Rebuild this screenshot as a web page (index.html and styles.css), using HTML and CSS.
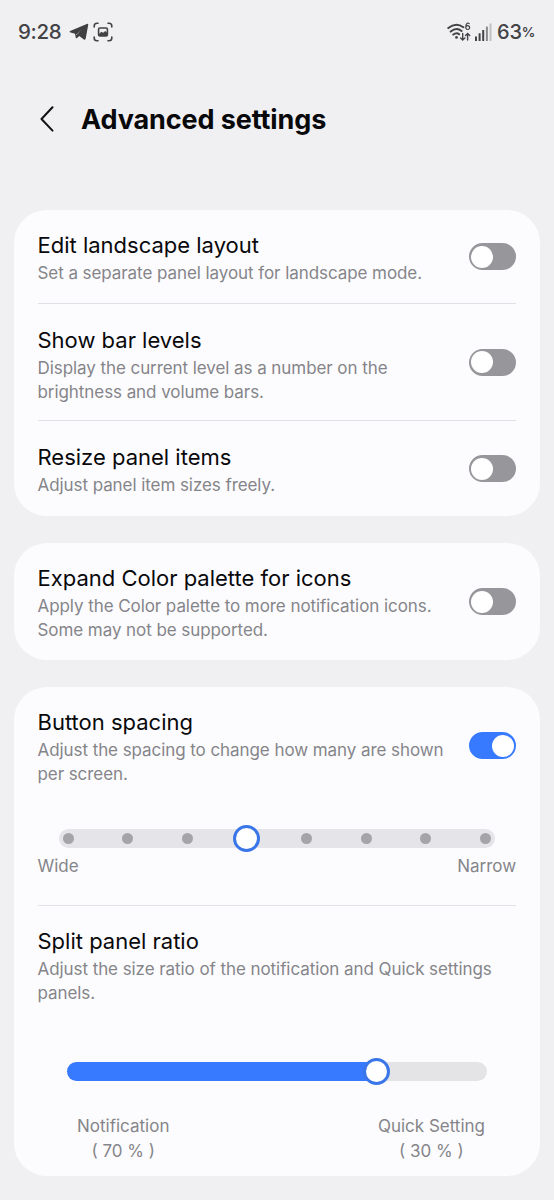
FILE: index.html
```html
<!DOCTYPE html>
<html lang="en">
<head>
<meta charset="utf-8">
<title>Advanced settings</title>
<link rel="stylesheet" href="styles.css">
</head>
<body>
<div class="status">
  <span class="clock">9:28</span>
  <svg class="telegram" width="20" height="18" viewBox="0 0 20 18"><path d="M.8 9.2Q.2 8.6 1.2 8.1L17.8.9Q19.5.3 19.2 2L16.7 15.6Q16.3 17.3 14.9 16.4L10.2 12.9 7.8 15.2Q6.9 15.7 6.7 14.6L6 10.8ZM7.4 11.4 7.6 12.6 8.2 11.3 12.8 6.6Z" fill="#3f3f42"/></svg>
  <svg class="capture" width="20" height="20" viewBox="0 0 20 20" fill="none" stroke="#434346" stroke-width="1.6" stroke-linecap="round"><path d="M1.2 5V4Q1.2 1.2 4 1.2H5M15 1.2h1Q18.8 1.2 18.8 4v1M18.8 15v1q0 2.8-2.8 2.8h-1M5 18.8H4Q1.2 18.8 1.2 16v-1"/><rect x="5.6" y="6" width="8.8" height="8" rx="1.3"/><path d="m6 12 2.4-2.2 1.8 1 2-1.8 2 1.7v3.3H6Z" fill="#434346" stroke="none"/></svg>
  <span class="space"></span>
  <svg class="wifi" width="24" height="20" viewBox="0 0 24 20" fill="none" stroke="#434346" stroke-width="2" stroke-linecap="round"><path d="M1.3 6.1Q8.8-.3 16.4 5.2M3.7 9.6Q9.4 4.9 14.6 9M6.3 12.6Q9.6 9.9 12.1 12.3"/><circle cx="9.5" cy="15.4" r="1.4" fill="#434346" stroke="none"/><path d="M15.7 11.5V18m-2.1-2 2.1 2.1 2.1-2.1M20.6 18v-6.5m-2.1 2 2.1-2.1 2.1 2.1" stroke-width="1.4"/><path d="M22.2 1.6Q21.2.7 20.2 1.2 18.8 2 18.8 5.2M20.7 3.7a1.9 1.9 0 1 1-.01 0Z" stroke-width="1.2"/></svg>
  <svg class="signal" width="17" height="18" viewBox="0 0 17 18"><path d="M0 13.5h2V18H0zM3.6 10.3h2V18h-2zM7.2 7h2v11h-2z" fill="#434346"/><path d="M10.9 3.6h2V18h-2z" fill="#8a8a8d"/><path d="M14.5.5h2V18h-2z" fill="#c0c0c3"/></svg>
  <span class="battery">63<small>%</small></span>
</div>
<header class="header">
  <svg class="back" width="14" height="26" viewBox="0 0 14 26"><path d="M12.5 1.3 1.5 13l11 11.6" fill="none" stroke="#111" stroke-width="2" stroke-linecap="round" stroke-linejoin="round"/></svg>
  <h1>Advanced settings</h1>
</header>
<main>
  <section class="card">
    <div class="row first"><div class="copy"><h2>Edit landscape layout</h2><p>Set a separate panel layout for landscape mode.</p></div><i class="switch"></i></div>
    <div class="row"><div class="copy"><h2>Show bar levels</h2><p>Display the current level as a number on the<br>brightness and volume bars.</p></div><i class="switch"></i></div>
    <div class="row"><div class="copy"><h2>Resize panel items</h2><p>Adjust panel item sizes freely.</p></div><i class="switch"></i></div>
  </section>
  <section class="card palette">
    <div class="row"><div class="copy"><h2>Expand Color palette for icons</h2><p>Apply the Color palette to more notification icons.<br>Some may not be supported.</p></div><i class="switch"></i></div>
  </section>
  <section class="card sliders">
    <div class="row spacing"><div class="copy"><h2>Button spacing</h2><p>Adjust the spacing to change how many are shown<br>per screen.</p></div><i class="switch on"></i></div>
    <div class="steps"><i></i><i></i><i></i><i class="knob"></i><i></i><i></i><i></i><i></i></div>
    <div class="ends"><span>Wide</span><span>Narrow</span></div>
    <div class="row split"><div class="copy"><h2>Split panel ratio</h2><p>Adjust the size ratio of the notification and Quick settings<br>panels.</p></div></div>
    <div class="ratio"><div class="fill"></div><i class="knob"></i></div>
    <div class="shares"><span>Notification<br>( 70 % )</span><span>Quick Setting<br>( 30 % )</span></div>
  </section>
</main>
</body>
</html>
```
FILE: styles.css
```css
* { box-sizing: border-box; }
body { margin: 0; height: 1200px; overflow: hidden; background: #f0f0f3; color: #09090b; font-family: Inter, "Liberation Sans", sans-serif; }
svg { display: block; flex: none; }
.status { display: flex; align-items: center; height: 63px; padding: 0 20px 0 18px; color: #434346; }
.clock { width: 51px; font-size: 20.5px; font-weight: 500; letter-spacing: -.3px; }
.capture { margin-left: 4px; }
.space { flex: 1; }
.signal { margin: 0 5px 0 4px; }
.battery { width: 37px; font-size: 20px; font-weight: 500; white-space: nowrap; }
.battery small { margin-left: -.5px; font-size: 13.5px; font-weight: 600; vertical-align: 2px; }
.header { display: flex; align-items: center; height: 111px; padding-left: 40px; }
.header h1 { margin: 0 0 0 27px; padding-top: 2px; font-size: 27px; font-weight: 700; letter-spacing: -.1px; }
main { padding: 36px 14px 0 13.5px; }
.card { height: 306px; padding: 0 24px; border-radius: 33px; background: #fcfcff; }
.card + .card { margin-top: 27px; }
.palette { height: 117px; }
.sliders { height: 489px; }
.row { display: flex; align-items: center; justify-content: space-between; height: 94px; border-bottom: 1px solid #e1e1e5; }
.row:nth-child(2) { height: 117px; }
.row:nth-child(3) { height: 95px; border: 0; }
.palette .row { height: 117px; border: 0; }
.copy { align-self: flex-start; padding-top: 22px; white-space: nowrap; }
.first .copy, .palette .copy, .spacing .copy { padding-top: 21px; }
h2 { margin: 0; font-size: 22px; line-height: 28px; font-weight: 400; letter-spacing: 0; }
p { margin: 3px 0 0; color: #858589; font-size: 17px; line-height: 23.5px; letter-spacing: -.07px; }
.switch { display: block; flex: none; width: 47.5px; height: 27px; padding: 2.5px; border-radius: 14px; background: #97969b; }
.switch::before { content: ""; display: block; width: 22px; height: 22px; border-radius: 50%; background: #fff; }
.switch.on { background: #387aff; }
.switch.on::before { margin-left: auto; }
.sliders .spacing { height: 117px; border: 0; }
.steps { display: flex; align-items: center; justify-content: space-between; height: 19px; margin: 25px 21.5px 0; padding: 0 3.5px; border-radius: 10px; background: #e5e4e9; }
.steps i { width: 11px; height: 11px; border-radius: 50%; background: #a5a4a8; }
.knob, .steps .knob { width: 27px; height: 27px; border: 3px solid #3b76e8; border-radius: 50%; background: #fff; }
.steps .knob { flex: none; margin: 0 -8px; }
.ends { display: flex; justify-content: space-between; height: 58px; padding-top: 7px; border-bottom: 1px solid #e4e4e8; color: #858589; font-size: 17px; line-height: 23px; letter-spacing: -.05px; }
.sliders .split { height: 118px; border: 0; }
.split .copy { padding-top: 21px; }
.ratio { display: flex; align-items: center; height: 19px; margin: 38px 29.5px 0; border-radius: 10px; background: #e4e4e6; }
.fill { width: 310px; height: 19px; border-radius: 10px 0 0 10px; background: #387aff; }
.ratio .knob { flex: none; margin-left: -14px; }
.shares { display: flex; justify-content: space-between; margin: 33px 31px 0 39.5px; color: #858589; font-size: 17px; line-height: 24.5px; text-align: center; letter-spacing: 0; }
```
